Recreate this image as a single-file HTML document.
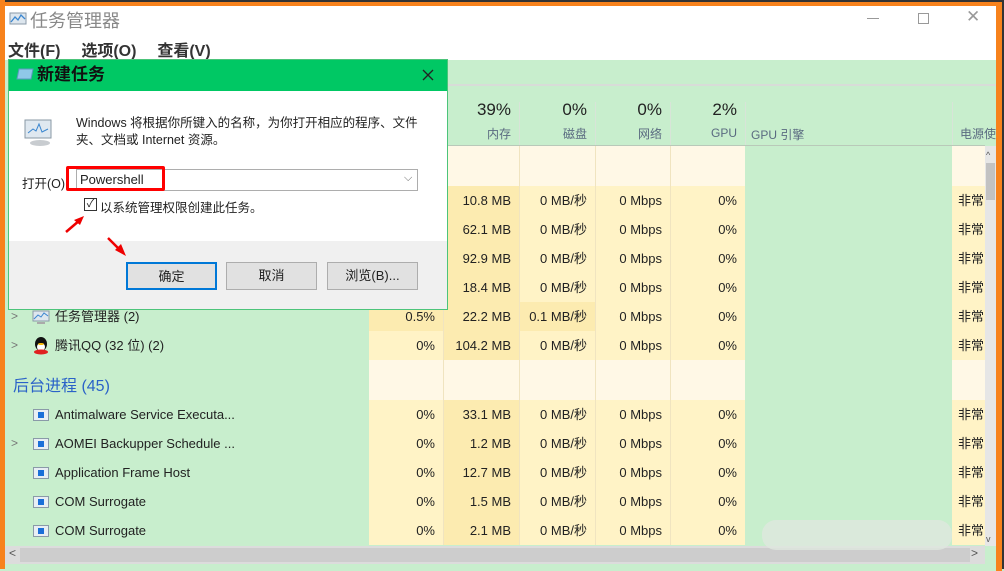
<!DOCTYPE html>
<html><head><meta charset="utf-8"><style>
*{box-sizing:border-box;margin:0;padding:0}
body{width:1004px;height:569px;overflow:hidden;position:relative;background:#c8eecd;font-family:"Liberation Sans","Noto Sans CJK SC",sans-serif;color:#222}
.a{position:absolute}
.c{position:absolute;font-size:13px;text-align:right;padding-right:8px;line-height:29px;height:29px;white-space:nowrap}
.n{position:absolute;font-size:13px;line-height:29px;white-space:nowrap}
.ico{position:absolute;width:16px;height:12px;border:1px solid #8a9aa8;background:#e8eef4}
.ico:after{content:"";position:absolute;left:4px;top:2px;width:6px;height:6px;background:#1a6fd8}
.chev{position:absolute;font-size:12px;color:#777}
.btn{position:absolute;top:262px;height:28px;width:91px;background:#e1e1e1;border:1px solid #adadad;font-size:13px;text-align:center;line-height:26px}
</style></head><body>
<!-- frame -->
<div class="a" style="left:0;top:0;width:1004px;height:2px;background:#333"></div>
<div class="a" style="left:0;top:2px;width:1004px;height:4px;background:#f7821c"></div>
<div class="a" style="left:0;top:0;width:5px;height:569px;background:#f7821c"></div>
<div class="a" style="left:996px;top:2px;width:6px;height:569px;background:#f7821c"></div>
<div class="a" style="left:1002px;top:0;width:2px;height:569px;background:#333"></div>
<!-- title & menu -->
<div class="a" style="left:5px;top:6px;width:991px;height:54px;background:#fff"></div>
<svg class="a" style="left:9px;top:11px" width="18" height="16"><rect x="1" y="2" width="16" height="11" fill="#dde6ee" stroke="#8a9aa8"/><polyline points="2,11 6,6 9,9 12,4 16,8" fill="none" stroke="#3a86d0" stroke-width="1.3"/></svg>
<div class="a" style="left:30px;top:7px;font-size:18px;color:#888">任务管理器</div>
<div class="a" style="left:867px;top:18px;width:12px;height:1px;background:#999"></div>
<div class="a" style="left:918px;top:13px;width:11px;height:11px;border:1px solid #999"></div>
<div class="a" style="left:966px;top:7px;font-size:17px;color:#999">✕</div>
<div class="a" style="left:8px;top:37px;font-size:16px;color:#333;font-weight:bold;word-spacing:6px">文件(F)&nbsp; 选项(O)&nbsp; 查看(V)</div>
<!-- header -->
<div class="a" style="left:441px;top:84px;width:555px;height:2px;background:#d8dcd8"></div>
<div class="a" style="left:369px;top:145px;width:616px;height:1px;background:#b9c9b9"></div>
<div class="a" style="left:443px;top:100px;width:76px;font-size:17px;text-align:right;padding-right:8px">39%</div>
<div class="a" style="left:519px;top:100px;width:76px;font-size:17px;text-align:right;padding-right:8px">0%</div>
<div class="a" style="left:595px;top:100px;width:75px;font-size:17px;text-align:right;padding-right:8px">0%</div>
<div class="a" style="left:670px;top:100px;width:75px;font-size:17px;text-align:right;padding-right:8px">2%</div>
<div class="a" style="left:443px;top:125px;width:76px;font-size:12px;color:#5a6a80;text-align:right;padding-right:8px">内存</div>
<div class="a" style="left:519px;top:125px;width:76px;font-size:12px;color:#5a6a80;text-align:right;padding-right:8px">磁盘</div>
<div class="a" style="left:595px;top:125px;width:75px;font-size:12px;color:#5a6a80;text-align:right;padding-right:8px">网络</div>
<div class="a" style="left:670px;top:126px;width:75px;font-size:12px;color:#5a6a80;text-align:right;padding-right:8px">GPU</div>
<div class="a" style="left:751px;top:126px;font-size:12px;color:#5a6a80">GPU 引擎</div>
<div class="a" style="left:960px;top:125px;font-size:12px;color:#5a6a80;white-space:nowrap">电源使</div>
<div class="a" style="left:519px;top:102px;width:1px;height:43px;background:#d8e4d8"></div>
<div class="a" style="left:595px;top:102px;width:1px;height:43px;background:#d8e4d8"></div>
<div class="a" style="left:670px;top:102px;width:1px;height:43px;background:#d8e4d8"></div>
<div class="a" style="left:745px;top:102px;width:1px;height:43px;background:#d8e4d8"></div>
<div class="a" style="left:952px;top:102px;width:1px;height:43px;background:#d8e4d8"></div>
<!-- data cells -->
<div class="a" style="left:369px;top:146px;width:376px;height:399px;background:#fff3c6"></div>
<div class="a" style="left:952px;top:146px;width:33px;height:399px;background:#fff3c6"></div>
<div class="a" style="left:443px;top:186px;width:76px;height:359px;background:#fcebb0"></div>
<div class="a" style="left:369px;top:146px;width:376px;height:40px;background:#fff8e6"></div>
<div class="a" style="left:952px;top:146px;width:33px;height:40px;background:#fff8e6"></div>
<div class="a" style="left:369px;top:360px;width:376px;height:40px;background:#fff8e6"></div>
<div class="a" style="left:952px;top:360px;width:33px;height:40px;background:#fff8e6"></div>
<div class="a" style="left:369px;top:302px;width:74px;height:29px;background:#fcebb0"></div>
<div class="a" style="left:519px;top:302px;width:76px;height:29px;background:#fcebb0"></div>
<div class="a" style="left:443px;top:146px;width:1px;height:399px;background:#f0e4c0"></div>
<div class="a" style="left:519px;top:146px;width:1px;height:399px;background:#f0e4c0"></div>
<div class="a" style="left:595px;top:146px;width:1px;height:399px;background:#f0e4c0"></div>
<div class="a" style="left:670px;top:146px;width:1px;height:399px;background:#f0e4c0"></div>

<div class="c" style="left:443px;top:186px;width:76px">10.8 MB</div><div class="c" style="left:519px;top:186px;width:76px">0 MB/秒</div><div class="c" style="left:595px;top:186px;width:75px">0 Mbps</div><div class="c" style="left:670px;top:186px;width:75px">0%</div><div class="n" style="left:958px;top:186px">非常</div>
<div class="c" style="left:443px;top:215px;width:76px">62.1 MB</div><div class="c" style="left:519px;top:215px;width:76px">0 MB/秒</div><div class="c" style="left:595px;top:215px;width:75px">0 Mbps</div><div class="c" style="left:670px;top:215px;width:75px">0%</div><div class="n" style="left:958px;top:215px">非常</div>
<div class="c" style="left:443px;top:244px;width:76px">92.9 MB</div><div class="c" style="left:519px;top:244px;width:76px">0 MB/秒</div><div class="c" style="left:595px;top:244px;width:75px">0 Mbps</div><div class="c" style="left:670px;top:244px;width:75px">0%</div><div class="n" style="left:958px;top:244px">非常</div>
<div class="c" style="left:443px;top:273px;width:76px">18.4 MB</div><div class="c" style="left:519px;top:273px;width:76px">0 MB/秒</div><div class="c" style="left:595px;top:273px;width:75px">0 Mbps</div><div class="c" style="left:670px;top:273px;width:75px">0%</div><div class="n" style="left:958px;top:273px">非常</div>
<div class="c" style="left:369px;top:302px;width:74px">0.5%</div><div class="c" style="left:443px;top:302px;width:76px">22.2 MB</div><div class="c" style="left:519px;top:302px;width:76px">0.1 MB/秒</div><div class="c" style="left:595px;top:302px;width:75px">0 Mbps</div><div class="c" style="left:670px;top:302px;width:75px">0%</div><div class="n" style="left:958px;top:302px">非常</div>
<div class="c" style="left:369px;top:331px;width:74px">0%</div><div class="c" style="left:443px;top:331px;width:76px">104.2 MB</div><div class="c" style="left:519px;top:331px;width:76px">0 MB/秒</div><div class="c" style="left:595px;top:331px;width:75px">0 Mbps</div><div class="c" style="left:670px;top:331px;width:75px">0%</div><div class="n" style="left:958px;top:331px">非常</div>
<div class="c" style="left:369px;top:400px;width:74px">0%</div><div class="c" style="left:443px;top:400px;width:76px">33.1 MB</div><div class="c" style="left:519px;top:400px;width:76px">0 MB/秒</div><div class="c" style="left:595px;top:400px;width:75px">0 Mbps</div><div class="c" style="left:670px;top:400px;width:75px">0%</div><div class="n" style="left:958px;top:400px">非常</div>
<div class="c" style="left:369px;top:429px;width:74px">0%</div><div class="c" style="left:443px;top:429px;width:76px">1.2 MB</div><div class="c" style="left:519px;top:429px;width:76px">0 MB/秒</div><div class="c" style="left:595px;top:429px;width:75px">0 Mbps</div><div class="c" style="left:670px;top:429px;width:75px">0%</div><div class="n" style="left:958px;top:429px">非常</div>
<div class="c" style="left:369px;top:458px;width:74px">0%</div><div class="c" style="left:443px;top:458px;width:76px">12.7 MB</div><div class="c" style="left:519px;top:458px;width:76px">0 MB/秒</div><div class="c" style="left:595px;top:458px;width:75px">0 Mbps</div><div class="c" style="left:670px;top:458px;width:75px">0%</div><div class="n" style="left:958px;top:458px">非常</div>
<div class="c" style="left:369px;top:487px;width:74px">0%</div><div class="c" style="left:443px;top:487px;width:76px">1.5 MB</div><div class="c" style="left:519px;top:487px;width:76px">0 MB/秒</div><div class="c" style="left:595px;top:487px;width:75px">0 Mbps</div><div class="c" style="left:670px;top:487px;width:75px">0%</div><div class="n" style="left:958px;top:487px">非常</div>
<div class="c" style="left:369px;top:516px;width:74px">0%</div><div class="c" style="left:443px;top:516px;width:76px">2.1 MB</div><div class="c" style="left:519px;top:516px;width:76px">0 MB/秒</div><div class="c" style="left:595px;top:516px;width:75px">0 Mbps</div><div class="c" style="left:670px;top:516px;width:75px">0%</div><div class="n" style="left:958px;top:516px">非常</div>

<!-- names -->
<div class="chev" style="left:11px;top:309px">&gt;</div>
<svg class="a" style="left:32px;top:309px" width="18" height="16"><rect x="1" y="2" width="16" height="10" fill="#dde6ee" stroke="#8a9aa8"/><polyline points="2,10 6,6 9,8 12,4 16,7" fill="none" stroke="#3a86d0"/><rect x="5" y="13" width="8" height="2" fill="#aaa"/></svg>
<div class="n" style="left:55px;top:302px">任务管理器 (2)</div>
<div class="chev" style="left:11px;top:338px">&gt;</div>
<svg class="a" style="left:33px;top:336px" width="16" height="19"><ellipse cx="8" cy="8" rx="6" ry="7" fill="#111"/><ellipse cx="8" cy="11" rx="4" ry="4" fill="#fff"/><ellipse cx="8" cy="16" rx="7" ry="2.5" fill="#e02020"/><ellipse cx="8" cy="8" rx="3" ry="1" fill="#f5b800"/></svg>
<div class="n" style="left:55px;top:331px">腾讯QQ (32 位) (2)</div>
<div class="a" style="left:13px;top:372px;font-size:16px;color:#2a62c8">后台进程 (45)</div>
<div class="ico" style="left:33px;top:409px"></div><div class="n" style="left:55px;top:400px">Antimalware Service Executa...</div>
<div class="chev" style="left:11px;top:436px">&gt;</div><div class="ico" style="left:33px;top:438px"></div><div class="n" style="left:55px;top:429px">AOMEI Backupper Schedule ...</div>
<div class="ico" style="left:33px;top:467px"></div><div class="n" style="left:55px;top:458px">Application Frame Host</div>
<div class="ico" style="left:33px;top:496px"></div><div class="n" style="left:55px;top:487px">COM Surrogate</div>
<div class="ico" style="left:33px;top:525px"></div><div class="n" style="left:55px;top:516px">COM Surrogate</div>

<!-- scrollbars -->
<div class="a" style="left:5px;top:546px;width:980px;height:18px;background:#dcdcdc"></div>
<div class="a" style="left:20px;top:548px;width:950px;height:14px;background:#cdcdcd"></div>
<div class="a" style="left:9px;top:546px;font-size:12px;color:#555">&lt;</div>
<div class="a" style="left:971px;top:546px;font-size:12px;color:#555">&gt;</div>
<div class="a" style="left:985px;top:146px;width:11px;height:400px;background:#e6e6e6"></div>
<div class="a" style="left:986px;top:163px;width:9px;height:37px;background:#c2c2c2"></div>
<div class="a" style="left:986px;top:150px;font-size:9px;color:#555">^</div>
<div class="a" style="left:986px;top:534px;font-size:9px;color:#555">v</div>
<div class="a" style="left:762px;top:520px;width:190px;height:30px;background:#dfe7df;border-radius:14px;opacity:.8"></div>

<!-- dialog -->
<div class="a" style="left:8px;top:59px;width:440px;height:251px;background:#fff;border:1px solid #4cc47a"></div>
<div class="a" style="left:9px;top:60px;width:438px;height:31px;background:#00c864"></div>
<svg class="a" style="left:16px;top:67px" width="18" height="14"><path d="M3 2 L17 2 L15 12 L1 12 Z" fill="#8fc8e8" stroke="#5a9ac0"/></svg>
<div class="a" style="left:37px;top:63px;font-size:17px;font-weight:bold;color:#111;line-height:24px">新建任务</div>
<svg class="a" style="left:422px;top:69px" width="12" height="12"><path d="M1 1 L11 11 M11 1 L1 11" stroke="#222" stroke-width="1.3"/></svg>
<svg class="a" style="left:22px;top:117px" width="34" height="30"><rect x="3" y="3" width="26" height="18" fill="#dfe8f0" stroke="#8a98a4"/><polyline points="6,16 11,12 14,14 17,7 20,15 26,12" fill="none" stroke="#3a86d0"/><ellipse cx="18" cy="26" rx="10" ry="3" fill="#c8ccd0"/></svg>
<div class="a" style="left:76px;top:115px;font-size:12.5px;line-height:17px;color:#222;width:345px">Windows 将根据你所键入的名称，为你打开相应的程序、文件夹、文档或 Internet 资源。</div>
<div class="a" style="left:22px;top:173px;font-size:12.5px">打开(O):</div>
<div class="a" style="left:76px;top:169px;width:342px;height:22px;border:1px solid #adadad;background:#fff"></div>
<div class="a" style="left:80px;top:172px;font-size:13px">Powershell</div>
<div class="a" style="left:404px;top:172px;font-size:11px;color:#666">⌵</div>
<div class="a" style="left:66px;top:166px;width:99px;height:25px;border:3px solid #f00;border-radius:2px"></div>
<div class="a" style="left:84px;top:198px;width:13px;height:13px;border:1px solid #333;font-size:11px;line-height:11px;text-align:center">✓</div>
<div class="a" style="left:100px;top:197px;font-size:12.5px">以系统管理权限创建此任务。</div>
<div class="a" style="left:9px;top:241px;width:438px;height:68px;background:#f0f0f0"></div>
<svg class="a" style="left:60px;top:210px" width="80" height="50"><line x1="6" y1="22" x2="20" y2="10" stroke="#e00" stroke-width="2.5"/><polygon points="24,6 14,10 20,15" fill="#e00"/><line x1="48" y1="28" x2="60" y2="40" stroke="#e00" stroke-width="2.5"/><polygon points="66,46 55,40 61,34" fill="#e00"/></svg>
<div class="btn" style="left:126px;border:2px solid #0078d7">确定</div>
<div class="btn" style="left:226px">取消</div>
<div class="btn" style="left:327px">浏览(B)...</div>
</body></html>
